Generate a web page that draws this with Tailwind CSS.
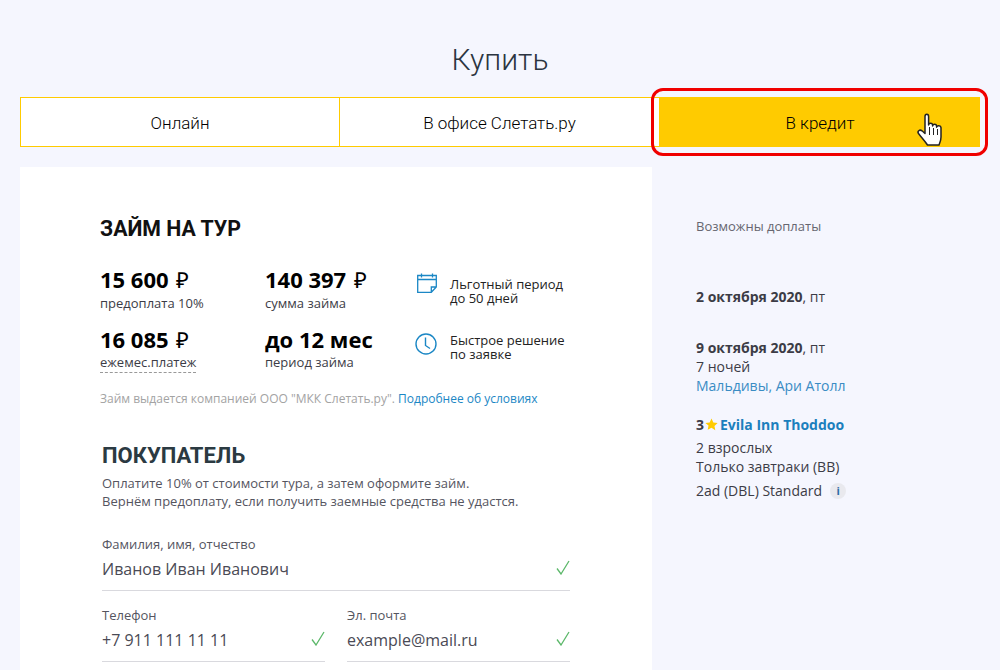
<!DOCTYPE html>
<html lang="ru">
  <head>
    <meta charset="UTF-8" />
    <title>Купить</title>
    <script src="https://cdn.jsdelivr.net/npm/@tailwindcss/browser@4"></script>
  </head>
  <body class="bg-[#f5f6fe] h-[670px] overflow-hidden font-['Open_Sans',sans-serif] text-[#3c3c46]">
    <h1 class="pt-[39px] h-[97px] text-center text-[30px] leading-[42px] font-light font-['Roboto',sans-serif] text-[#2b3440]">Купить</h1>

    <div class="relative mx-5 flex h-[50px] font-['Roboto',sans-serif] font-light text-[17px] text-black">
      <div class="w-[320px] pt-[3px] flex items-center justify-center bg-white border border-[#ffcb00]">Онлайн</div>
      <div class="w-[320px] pt-[3px] flex items-center justify-center bg-white border-y border-r border-[#ffcb00]">В офисе Слетать.ру</div>
      <div class="w-[320px] pt-[3px] flex items-center justify-center bg-[#ffcb00]">В кредит</div>
      <div class="absolute left-[631px] top-[-9px] w-[337px] h-[68px] rounded-[12px] border-[3px] border-[#f00000]"></div>
      <svg class="absolute left-[896px] top-[16px]" width="28" height="34" viewBox="0 0 28 34">
        <path d="M9 3.500c0-3 3.600-3 3.600 0V12c.3-2.400 3.800-2.400 4 0v1c.3-2.200 3.800-2.200 4 0v1.200c.3-2 4.300-1.800 4.400.4V24c0 3.500-1 5-2 8H11.500C9 28 6 25 2.500 20.500 1 18.500 3.500 16 6 17.800L9 20.500V3.500Z" fill="#fff" stroke="#222" stroke-width="1.500" stroke-linejoin="round" />
        <path d="M13.500 14v8M17.500 15v7M21.500 16v6" stroke="#222" stroke-width="1" />
      </svg>
    </div>

    <div class="mt-5 mx-5 flex">
      <main class="w-[632px] h-[520px] shrink-0 bg-white pl-20 pt-[48px]">
        <h2 class="text-[21.3px] leading-7 font-bold font-['Roboto',sans-serif] text-[#111]">ЗАЙМ НА ТУР</h2>

        <div class="mt-[23px] flex">
          <div class="w-[165px]">
            <div class="text-[22px] leading-[26px] font-bold text-black">15 600 <span class="ml-[2px] font-normal">₽</span></div>
            <div class="text-[13px] leading-[22px]">предоплата 10%</div>
            <div class="mt-[12px] text-[22px] leading-[26px] font-bold text-black">16 085 <span class="ml-[2px] font-normal">₽</span></div>
            <div class="text-[13px] leading-[19px] mt-[1px] w-fit border-b border-dashed border-[#999]">ежемес.платеж</div>
          </div>
          <div class="w-[150px]">
            <div class="text-[22px] leading-[26px] font-bold text-black">140 397 <span class="ml-[2px] font-normal">₽</span></div>
            <div class="text-[13px] leading-[22px]">сумма займа</div>
            <div class="mt-[12px] text-[22px] leading-[26px] font-bold text-black">до 12 мес</div>
            <div class="text-[13px] leading-[20px]">период займа</div>
          </div>
          <div class="pt-[7px] text-[13px] leading-[14px] text-[#222]">
            <div class="flex items-start gap-[13px] pl-[2px]">
              <svg width="20" height="20" viewBox="0 0 20 20" fill="none" stroke="#1b87c5" stroke-width="1.300">
                <path d="M.7 2.500h18.600v11.500l-5 5.300H.7V2.500ZM.7 6.500h18.600M4.500 .5v4M15.500 .5v4M19.300 14h-5v5.300" />
              </svg>
              <div class="mt-1">Льготный период<br />до 50 дней</div>
            </div>
            <div class="mt-[28px] flex items-start gap-[13px]">
              <svg width="22" height="22" viewBox="0 0 22 22" fill="none" stroke="#1b87c5" stroke-width="1.400">
                <circle cx="11" cy="11" r="10" />
                <path d="M10.500 4.500v8l4.500 3" />
              </svg>
              <div>Быстрое решение<br />по заявке</div>
            </div>
          </div>
        </div>

        <p class="mt-[18px] text-[12px] leading-[16px] text-[#a3a3a3]">Займ выдается компанией ООО "МКК Слетать.ру". <span class="text-[#1b87c5]">Подробнее об условиях</span></p>

        <h2 class="mt-[35px] ml-[2px] text-[22px] leading-7 font-bold font-['Roboto',sans-serif] text-[#2b3a42]">ПОКУПАТЕЛЬ</h2>
        <p class="mt-[4px] ml-[2px] text-[13px] leading-[18px] text-[#55555f]">Оплатите 10% от стоимости тура, а затем оформите займ.<br />Вернём предоплату, если получить заемные средства не удастся.</p>

        <div class="mt-[25px] ml-[2px] w-[468px]">
          <div class="text-[13px] leading-[18px] text-[#55555f]">Фамилия, имя, отчество</div>
          <div class="mt-[4px] h-[34px] flex justify-between border-b border-[#d9d9de] text-[16px] leading-[24px] text-[#4a4a55]">
            <span>Иванов Иван Иванович</span>
            <svg class="mt-[3px]" width="14" height="15" viewBox="0 0 14 15" fill="none" stroke="#5cb86a" stroke-width="1.300"><path d="M1 8.500 5 14 13 1" /></svg>
          </div>
          <div class="mt-[15px] flex gap-[22px]">
            <div class="flex-1">
              <div class="text-[13px] leading-[18px] text-[#55555f]">Телефон</div>
              <div class="mt-[4px] h-[34px] flex justify-between border-b border-[#d9d9de] text-[16px] leading-[24px] text-[#4a4a55]">
                <span>+7 911 111 11 11</span>
                <svg class="mt-[3px]" width="14" height="15" viewBox="0 0 14 15" fill="none" stroke="#5cb86a" stroke-width="1.300"><path d="M1 8.500 5 14 13 1" /></svg>
              </div>
            </div>
            <div class="flex-1">
              <div class="text-[13px] leading-[18px] text-[#55555f]">Эл. почта</div>
              <div class="mt-[4px] h-[34px] flex justify-between border-b border-[#d9d9de] text-[16px] leading-[24px] text-[#4a4a55]">
                <span>example@mail.ru</span>
                <svg class="mt-[3px]" width="14" height="15" viewBox="0 0 14 15" fill="none" stroke="#5cb86a" stroke-width="1.300"><path d="M1 8.500 5 14 13 1" /></svg>
              </div>
            </div>
          </div>
        </div>
      </main>

      <aside class="pl-[44px] pt-[50px] text-[14px] leading-[19px]">
        <div class="text-[13px] leading-[18px] text-[#666670]">Возможны доплаты</div>
        <div class="mt-[52px]"><b>2 октября 2020</b>, пт</div>
        <div class="mt-[32px]"><b>9 октября 2020</b>, пт</div>
        <div>7 ночей</div>
        <div class="text-[#3a8cc4]">Мальдивы, Ари Атолл</div>
        <div class="mt-[20px] flex items-center font-bold">
          <span>3</span>
          <svg class="ml-[1px] mr-[2px]" width="13" height="13" viewBox="0 0 24 24" fill="#ffcb00"><path d="M12 1l3.400 7.300 7.900 1-5.800 5.500 1.500 7.900L12 18l-7 3.700 1.500-7.900L.7 9.300l7.900-1L12 1Z" /></svg>
          <span class="text-[#1b7fbd]">Evila Inn Thoddoo</span>
        </div>
        <div class="mt-[4px]">2 взрослых</div>
        <div>Только завтраки (BB)</div>
        <div class="mt-[5px] flex items-center">2ad (DBL) Standard
          <span class="ml-2 w-4 h-4 rounded-full bg-[#e9e9ee] text-[#2d6ca8] text-[11px] font-bold flex items-center justify-center">i</span>
        </div>
      </aside>
    </div>
  </body>
</html>
